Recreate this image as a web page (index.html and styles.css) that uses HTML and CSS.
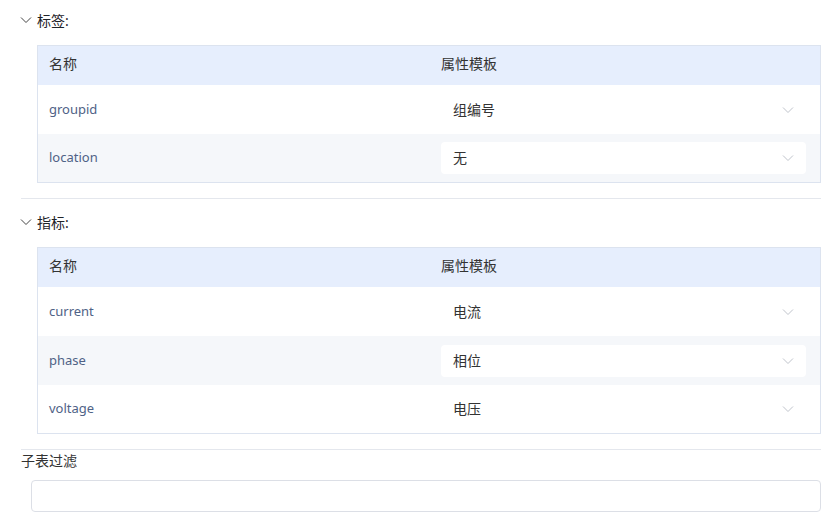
FILE: index.html
```html
<!DOCTYPE html>
<html lang="zh">
<head>
<meta charset="utf-8">
<link rel="stylesheet" href="styles.css">
</head>
<body>
<div class="page">
  <div class="section">
    <div class="section-head">
      <svg class="caret" width="12" height="8" viewBox="0 0 12 8"><path d="M1 1.5 L6 6.5 L11 1.5" fill="none" stroke="#444" stroke-width="1"/></svg>
      <span>标签:</span>
    </div>
    <div class="table">
      <div class="row head"><div class="cell">名称</div><div class="cell">属性模板</div></div>
      <div class="row"><div class="cell name">groupid</div><div class="cell"><div class="select"><span>组编号</span><svg width="12" height="8" viewBox="0 0 12 8"><path d="M1 1.5 L6 6.5 L11 1.5" fill="none" stroke="#c0c4cc" stroke-width="1"/></svg></div></div></div>
      <div class="row alt"><div class="cell name">location</div><div class="cell"><div class="select"><span>无</span><svg width="12" height="8" viewBox="0 0 12 8"><path d="M1 1.5 L6 6.5 L11 1.5" fill="none" stroke="#c0c4cc" stroke-width="1"/></svg></div></div></div>
    </div>
  </div>
  <div class="section">
    <div class="section-head">
      <svg class="caret" width="12" height="8" viewBox="0 0 12 8"><path d="M1 1.5 L6 6.5 L11 1.5" fill="none" stroke="#444" stroke-width="1"/></svg>
      <span>指标:</span>
    </div>
    <div class="table">
      <div class="row head"><div class="cell">名称</div><div class="cell">属性模板</div></div>
      <div class="row"><div class="cell name">current</div><div class="cell"><div class="select"><span>电流</span><svg width="12" height="8" viewBox="0 0 12 8"><path d="M1 1.5 L6 6.5 L11 1.5" fill="none" stroke="#c0c4cc" stroke-width="1"/></svg></div></div></div>
      <div class="row alt"><div class="cell name">phase</div><div class="cell"><div class="select"><span>相位</span><svg width="12" height="8" viewBox="0 0 12 8"><path d="M1 1.5 L6 6.5 L11 1.5" fill="none" stroke="#c0c4cc" stroke-width="1"/></svg></div></div></div>
      <div class="row"><div class="cell name">voltage</div><div class="cell"><div class="select"><span>电压</span><svg width="12" height="8" viewBox="0 0 12 8"><path d="M1 1.5 L6 6.5 L11 1.5" fill="none" stroke="#c0c4cc" stroke-width="1"/></svg></div></div></div>
    </div>
  </div>
  <div class="section last">
    <div class="label">子表过滤</div>
    <div class="input"></div>
  </div>
</div>
</body>
</html>
```
FILE: styles.css
```css
* { box-sizing: border-box; }
body {
  margin: 0;
  background: #fff;
  font-family: "Noto Sans", "Noto Sans CJK SC", sans-serif;
  font-size: 14px;
  color: #333;
}
.page { padding: 8px 11px 0 21px; }
.section { padding-bottom: 15px; border-bottom: 1px solid #e4e7ed; margin-bottom: 11px; }
.section.last { border-bottom: none; padding-bottom: 0; margin-bottom: 0; margin-top: -10px; }
.section-head {
  display: flex;
  align-items: center;
  height: 24px;
  margin-bottom: 13px;
  font-size: 14px;
  color: #1f2329;
}
.caret { margin-right: 5px; margin-left: -1px; }
.table {
  margin-left: 16px;
  border: 1px solid #dce3ef;
}
.row {
  display: grid;
  grid-template-columns: 1fr 1fr;
  height: 49px;
  align-items: center;
  background: #fff;
}
.row:last-child { height: 48px; padding-bottom: 1px; }
.row.alt { background: #f5f7fa; }
.row.head { height: 39px; padding-bottom: 6px; background: #e6eefd; color: #333; }
.cell { padding: 0 12px; }
.cell.name, .row.head .cell:first-child { padding-left: 11px; }
.name { color: #4f6286; font-size: 13px; padding-bottom: 1px; }
.select {
  height: 32px;
  border-radius: 4px;
  background: #fff;
  display: flex;
  align-items: center;
  justify-content: space-between;
  padding: 0 12px 2px;
  margin-right: 2px;
  color: #333;
}
.select svg { margin-top: 2px; }
.label { height: 20px; line-height: 20px; font-size: 14px; color: #333; }
.input {
  margin-top: 9px;
  margin-left: 10px;
  height: 32px;
  border: 1px solid #dcdfe6;
  border-radius: 4px;
  background: #fff;
}
```
